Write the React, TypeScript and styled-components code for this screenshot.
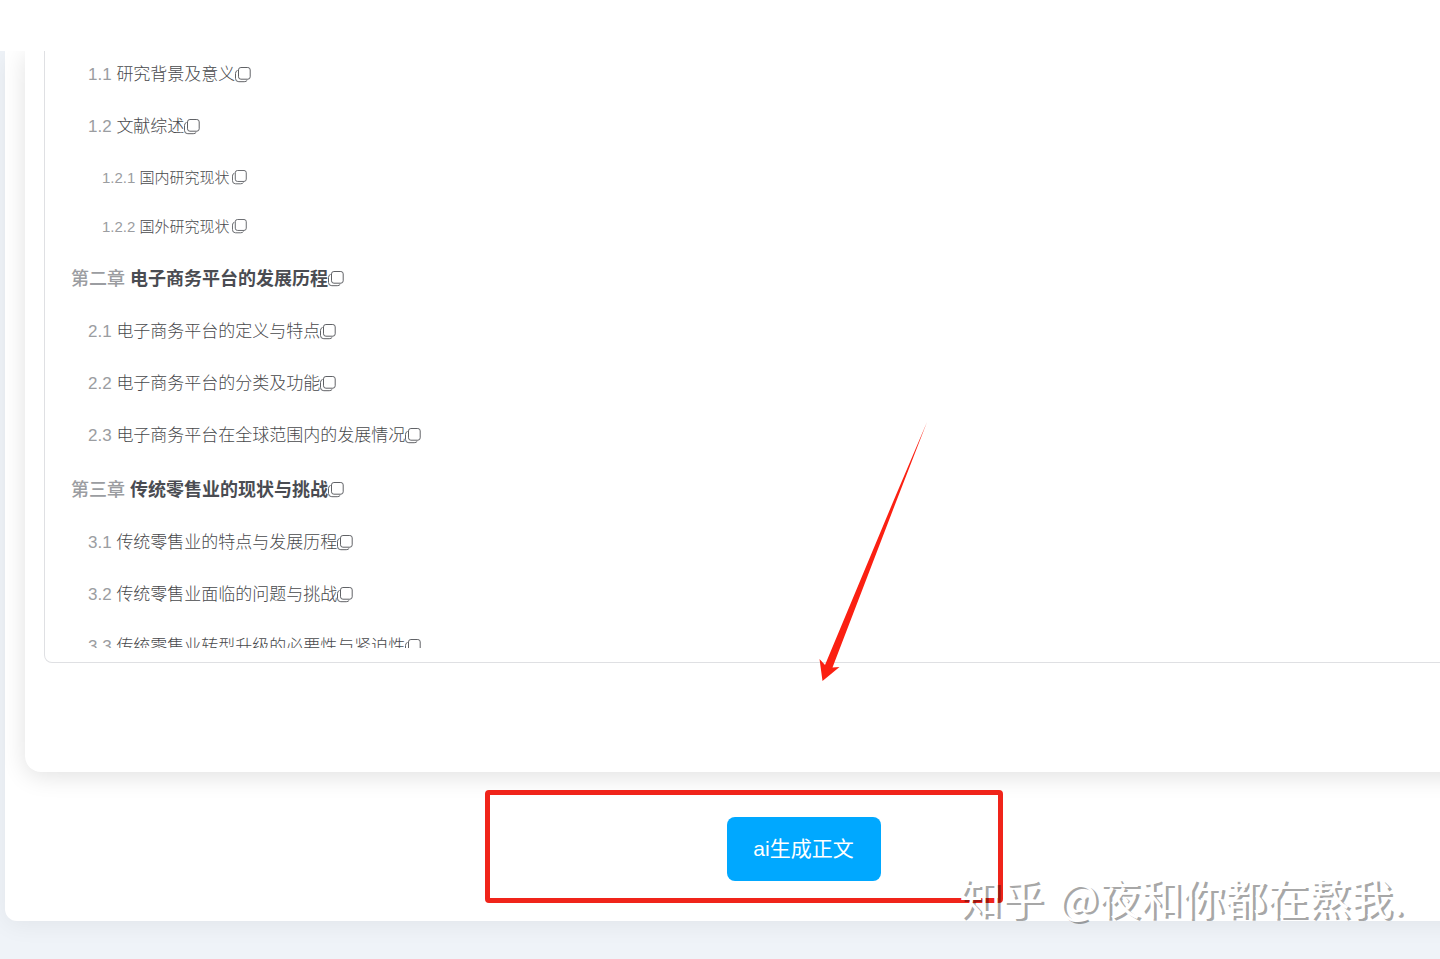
import React from "react";
import styled, { createGlobalStyle } from "styled-components";

const GlobalStyle = createGlobalStyle`
  * { box-sizing: border-box; }
  body {
    margin: 0;
    background: #eff3f8;
    color: #606266;
    font-family: "Liberation Sans", "Noto Sans CJK SC", sans-serif;
    line-height: 24px;
  }
`;

const Page = styled.div`
  position: relative;
  min-height: 100vh;
  overflow: hidden;
`;

const Header = styled.header`
  position: relative;
  z-index: 1;
  height: 51px;
  background: #fff;
`;

/* The workspace is wider than the window and runs off its right side. */
const Panel = styled.main`
  margin: 0 -162px 38px 5px;
  padding: 0 20px 40px;
  background: #fff;
  border-radius: 0 0 12px 12px;
  box-shadow: 0 4px 24px rgba(0, 0, 0, 0.06);
`;

const Card = styled.section`
  padding: 0 19px 109px;
  background: #fff;
  border-radius: 0 0 16px 16px;
  box-shadow: 0 4px 24px rgba(0, 0, 0, 0.12);
`;

const Outline = styled.div`
  padding: 0 26px 14px;
  border: 1px solid #dfe0e3;
  border-top: 0;
  border-radius: 0 0 8px 8px;
`;

const List = styled.ul`
  max-height: 597px;
  margin: 0;
  padding: 0;
  overflow: hidden;
  list-style: none;
`;

type Level = 1 | 2 | 3;
const rowHeight = { 1: 55, 2: 52, 3: 49 };
const indent = { 1: 0, 2: 17, 3: 31 };
const textSize = { 1: 18, 2: 17, 3: 15 };

const Row = styled.li<{ $level: Level }>`
  display: flex;
  align-items: center;
  height: ${(p) => rowHeight[p.$level]}px;
  padding-left: ${(p) => indent[p.$level]}px;
  font-size: ${(p) => textSize[p.$level]}px;
  font-weight: ${(p) => (p.$level === 1 ? 700 : 300)};
  color: ${(p) => (p.$level === 1 ? "#4a4c52" : "#48494c")};
  white-space: pre;

  &:first-child { margin-top: -2px; }
`;

const Num = styled.span<{ $level: Level }>`
  color: #9b9da1;
  font-weight: ${(p) => (p.$level === 1 ? 500 : 400)};
`;

const CopyButton = styled.button<{ $level: Level }>`
  display: flex;
  margin: 0 0 0 ${(p) => (p.$level === 3 ? 2 : 0)}px;
  padding: 0;
  border: 0;
  background: none;
  color: #606266;

  svg {
    width: ${(p) => (p.$level === 3 ? 15 : 16)}px;
    height: ${(p) => (p.$level === 3 ? 15 : 16)}px;
  }
`;

const Actions = styled.div`
  display: flex;
  justify-content: center;
  padding-top: 45px;
`;

const Target = styled.div`
  position: relative;
`;

const Generate = styled.button`
  display: block;
  width: 154px;
  height: 64px;
  padding: 0;
  border: 0;
  border-radius: 8px;
  background: #00a8ff;
  color: #fff;
  font: 400 21px/24px "Liberation Sans", "Noto Sans CJK SC", sans-serif;
`;

const Highlight = styled.div`
  position: absolute;
  top: -27px;
  left: -242px;
  width: 518px;
  height: 113px;
  border: 5px solid #f0241a;
  border-radius: 4px;
  pointer-events: none;
`;

const Arrow = styled.svg`
  position: absolute;
  top: -397px;
  left: 90px;
  width: 112px;
  height: 262px;
  pointer-events: none;
`;

const Watermark = styled.div`
  position: absolute;
  right: 36px;
  bottom: 32px;
  display: flex;
  gap: 15px;
  color: #fff;
  font: 400 42px/60px "Noto Sans CJK SC", sans-serif;
  text-shadow: 3px 2px 0 rgba(0, 0, 0, 0.34);
`;

const items: { level: Level; num: string; title: string }[] = [
  { level: 2, num: "1.1", title: "研究背景及意义" },
  { level: 2, num: "1.2", title: "文献综述" },
  { level: 3, num: "1.2.1", title: "国内研究现状" },
  { level: 3, num: "1.2.2", title: "国外研究现状" },
  { level: 1, num: "第二章", title: "电子商务平台的发展历程" },
  { level: 2, num: "2.1", title: "电子商务平台的定义与特点" },
  { level: 2, num: "2.2", title: "电子商务平台的分类及功能" },
  { level: 2, num: "2.3", title: "电子商务平台在全球范围内的发展情况" },
  { level: 1, num: "第三章", title: "传统零售业的现状与挑战" },
  { level: 2, num: "3.1", title: "传统零售业的特点与发展历程" },
  { level: 2, num: "3.2", title: "传统零售业面临的问题与挑战" },
  { level: 2, num: "3.3", title: "传统零售业转型升级的必要性与紧迫性" },
];

const CopyIcon = () => (
  <svg viewBox="0 0 16 16" fill="none" stroke="currentColor" strokeWidth="1" aria-hidden="true">
    <rect x="3.5" y="0.5" width="11.7" height="11.7" rx="2.4" />
    <path d="M2.6 3.4Q0.5 4 0.5 6.5V11.4Q0.5 14.7 3.8 14.7H9.2Q11.4 14.7 12.3 13.2" />
  </svg>
);

export default function App() {
  return (
    <Page>
      <GlobalStyle />
      <Header />
      <Panel>
        <Card>
          <Outline>
            <List>
              {items.map(({ level, num, title }) => (
                <Row key={num} $level={level}>
                  <Num $level={level}>{num} </Num>
                  <span>{title}</span>
                  <CopyButton $level={level} type="button" aria-label={`复制 ${title}`}>
                    <CopyIcon />
                  </CopyButton>
                </Row>
              ))}
            </List>
          </Outline>
        </Card>
        <Actions>
          <Target>
            <Generate type="button">ai生成正文</Generate>
            <Highlight />
            <Arrow viewBox="0 0 112 262" aria-hidden="true">
              <path d="M110 2L79 82L15.5 247.5L22.5 247L5.5 261L2.5 239L8 245L76 82Z" fill="#fb2012" />
            </Arrow>
          </Target>
        </Actions>
      </Panel>
      <Watermark>
        <span>知乎</span>
        <span>@夜和你都在熬我.</span>
      </Watermark>
    </Page>
  );
}
